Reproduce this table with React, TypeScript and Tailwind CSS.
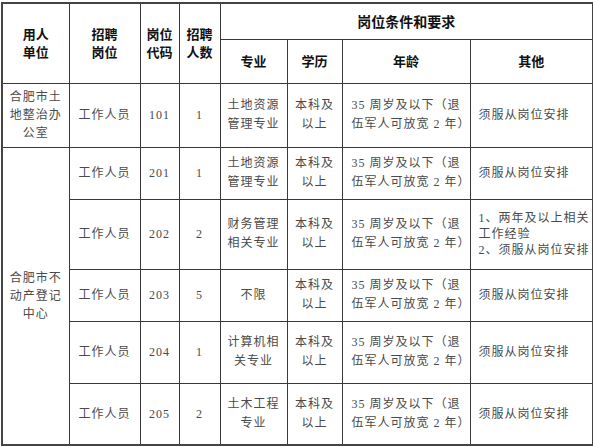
import React from "react";

const cell = "border border-[#3a3a3a] p-0 text-center align-middle";
const body = "text-[12px] tracking-[1px] text-[#4a4a4a] font-['Liberation_Serif','Noto_Sans_CJK_SC',serif]";
const head = "text-[13px] font-bold text-[#111] leading-[18px] font-['Noto_Sans_CJK_SC',sans-serif]";

type Row = {
  code: string;
  n: string;
  major: React.ReactNode;
  other?: React.ReactNode;
  h: string;
};

const Age = () => (
  <span className="leading-[19px]">
    35 周岁及以下（退
    <br />
    伍军人可放宽 2 年）
  </span>
);

const Edu = () => (
  <span className="leading-[19px]">
    本科及
    <br />
    以上
  </span>
);

const Two = ({ a, b }: { a: string; b: string }) => (
  <div className="flex flex-col items-center gap-0">
    <span className="leading-[18px]">{a}</span>
    <span className="leading-[18px]">{b}</span>
  </div>
);

export default function App() {
  const rows2: Row[] = [
    { code: "201", n: "1", major: <>土地资源<br />管理专业</>, h: "h-[52px]" },
    {
      code: "202",
      n: "2",
      major: <>财务管理<br />相关专业</>,
      other: (
        <span className="block leading-[16px]">
          1、两年及以上相关
          <br />
          工作经验
          <br />
          2、须服从岗位安排
        </span>
      ),
      h: "h-[70px]",
    },
    { code: "203", n: "5", major: <>不限</>, h: "h-[52px]" },
    { code: "204", n: "1", major: <>计算机相<br />关专业</>, h: "h-[62px]" },
    { code: "205", n: "2", major: <>土木工程<br />专业</>, h: "h-[62px]" },
  ];

  return (
    <div className="w-[593px] h-[447px] bg-white pt-[2px] pl-[1px]">
      <table className="table-fixed border-collapse border-2 border-[#444] w-[591px] h-[443px]">
        <colgroup>
          <col className="w-[67px]" />
          <col className="w-[71px]" />
          <col className="w-[39px]" />
          <col className="w-[41px]" />
          <col className="w-[67px]" />
          <col className="w-[55px]" />
          <col className="w-[128px]" />
          <col className="w-[123px]" />
        </colgroup>
        <tbody>
          <tr className="h-[36px]">
            <td rowSpan={2} className={`${cell} ${head}`}><Two a="用人" b="单位" /></td>
            <td rowSpan={2} className={`${cell} ${head}`}><Two a="招聘" b="岗位" /></td>
            <td rowSpan={2} className={`${cell} ${head}`}><Two a="岗位" b="代码" /></td>
            <td rowSpan={2} className={`${cell} ${head}`}><Two a="招聘" b="人数" /></td>
            <td colSpan={4} className={`${cell} ${head} text-[14px]`}>岗位条件和要求</td>
          </tr>
          <tr className="h-[44px]">
            <td className={`${cell} ${head}`}>专业</td>
            <td className={`${cell} ${head}`}>学历</td>
            <td className={`${cell} ${head}`}>年龄</td>
            <td className={`${cell} ${head}`}>其他</td>
          </tr>
          <tr className="h-[64px]">
            <td className={`${cell} ${body} leading-[18px]`}>合肥市土<br />地整治办<br />公室</td>
            <td className={`${cell} ${body}`}>工作人员</td>
            <td className={`${cell} ${body}`}>101</td>
            <td className={`${cell} ${body}`}>1</td>
            <td className={`${cell} ${body} leading-[19px]`}>土地资源<br />管理专业</td>
            <td className={`${cell} ${body}`}><Edu /></td>
            <td className={`${cell} ${body} text-left pl-[9px]`}><Age /></td>
            <td className={`${cell} ${body} text-left pl-[8px]`}>须服从岗位安排</td>
          </tr>
          {rows2.map((r, i) => (
            <tr key={r.code} className={r.h}>
              {i === 0 && (
                <td rowSpan={5} className={`${cell} ${body} leading-[18px]`}>
                  合肥市不<br />动产登记<br />中心
                </td>
              )}
              <td className={`${cell} ${body}`}>工作人员</td>
              <td className={`${cell} ${body}`}>{r.code}</td>
              <td className={`${cell} ${body}`}>{r.n}</td>
              <td className={`${cell} ${body} leading-[19px]`}>{r.major}</td>
              <td className={`${cell} ${body}`}><Edu /></td>
              <td className={`${cell} ${body} text-left pl-[9px]`}><Age /></td>
              <td className={`${cell} ${body} text-left pl-[8px]`}>{r.other ?? "须服从岗位安排"}</td>
            </tr>
          ))}
        </tbody>
      </table>
    </div>
  );
}
